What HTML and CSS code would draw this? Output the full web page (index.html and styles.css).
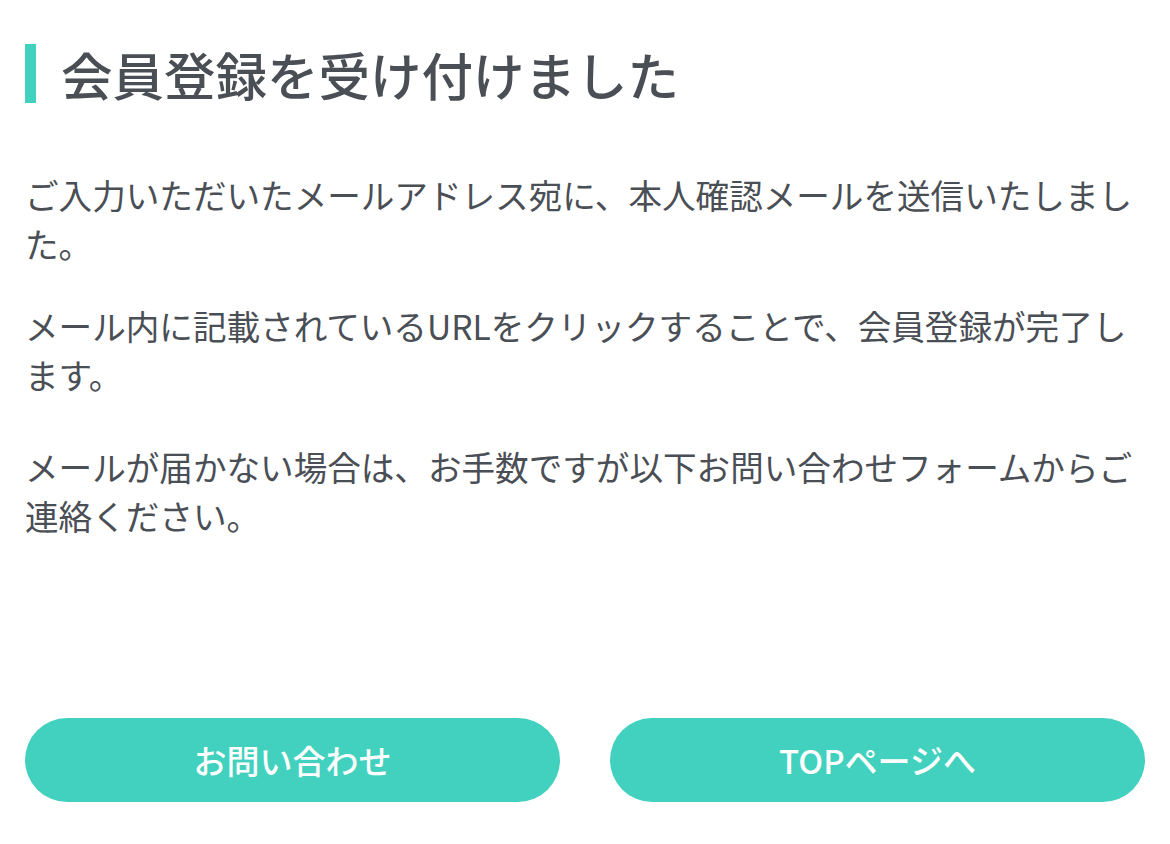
FILE: index.html
```html
<!DOCTYPE html>
<html lang="ja">

<head>
    <meta charset="UTF-8">
    <title>会員登録完了</title>
    <link rel="stylesheet" href="styles.css">
</head>

<body>
    <main class="kanryo">
        <h1 class="midashi">会員登録を受け付けました</h1>

        <div class="honbun">
            <p>ご入力いただいたメールアドレス宛に、本人確認メールを送信いたしました。</p>
            <p>メール内に記載されているURLをクリックすることで、会員登録が完了します。</p>
            <p class="tsuika">メールが届かない場合は、お手数ですが以下お問い合わせフォームからご連絡ください。</p>
        </div>

        <nav class="botan-retsu">
            <a href="#" class="botan">お問い合わせ</a>
            <a href="#" class="botan">TOPページへ</a>
        </nav>
    </main>
</body>

</html>
```

FILE: styles.css
```css
body {
    margin: 0;
    background: #ffffff;
    color: #4a4e55;
    font-family: "Noto Sans CJK JP", "Noto Sans", sans-serif;
}

.kanryo {
    padding: 44px 25px 0;
}

.midashi {
    margin: 0;
    padding-left: 25px;
    border-left: 11px solid #41d1be;
    font-size: 51.5px;
    font-weight: 500;
    line-height: 59px;
}

.honbun {
    margin-top: 67px;
}

.honbun p {
    margin: 0 0 33px;
    font-size: 33.6px;
    line-height: 49px;
}

.honbun .tsuika {
    margin-top: 43px;
    margin-bottom: 0;
}

.botan-retsu {
    display: grid;
    grid-template-columns: 1fr 1fr;
    gap: 50px;
    margin-top: 178px;
}

.botan {
    display: flex;
    align-items: center;
    justify-content: center;
    height: 84px;
    border-radius: 42px;
    background: #41d1be;
    color: #ffffff;
    font-size: 33px;
    font-weight: 500;
    text-decoration: none;
}
```
